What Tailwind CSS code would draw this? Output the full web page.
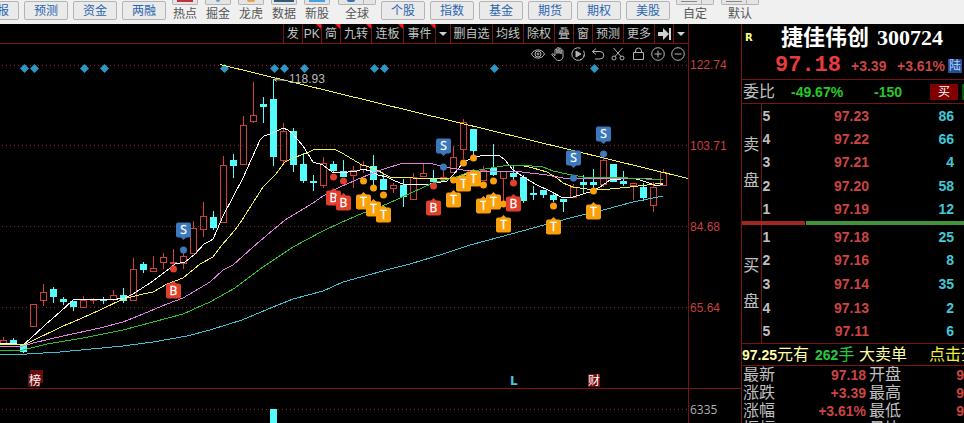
<!DOCTYPE html>
<html lang="zh-CN">

<head>
    <meta charset="UTF-8">
    <meta name="viewport" content="width=device-width, initial-scale=1.0">
    <title>捷佳伟创 300724</title>
    <script src="https://cdn.jsdelivr.net/npm/@tailwindcss/browser@4"></script>
</head>

<body class="h-screen overflow-hidden flex flex-col bg-black font-['Liberation_Sans','Noto_Sans_CJK_SC',sans-serif] text-xs leading-none">
    <!-- Top toolbar -->
    <header class="h-6 shrink-0 overflow-hidden bg-[#f0f0f0] text-[#555]">
        <nav class="-ml-[25px] flex items-start gap-[5px] whitespace-nowrap">
            <div class="flex gap-[5px] pt-px text-[#2a66ae]">
                <button class="h-[19px] w-11 rounded-xs border border-[#b4b4b4] bg-[#eaeaea]">研报</button>
                <button class="h-[19px] w-11 rounded-xs border border-[#b4b4b4] bg-[#eaeaea]">预测</button>
                <button class="h-[19px] w-11 rounded-xs border border-[#b4b4b4] bg-[#eaeaea]">资金</button>
                <button class="h-[19px] w-11 rounded-xs border border-[#b4b4b4] bg-[#eaeaea]">两融</button>
            </div>
            <div class="flex gap-[7px] pl-px">
                <button class="w-[26px]">
                    <span class="flex h-[5px] justify-center rounded-b-xs border border-t-0 border-[#b4b4b4] bg-[#e4e4e4]"><i class="h-[2px] w-4 bg-[#c03040]"></i></span>
                    <span class="mt-[2px] block leading-[14px]">热点</span>
                </button>
                <button class="w-[26px]">
                    <span class="flex h-[5px] justify-center rounded-b-xs border border-t-0 border-[#b4b4b4] bg-[#e4e4e4]"><i class="h-[2px] w-1 rounded-b-full bg-[#5b9bd5]"></i></span>
                    <span class="mt-[2px] block leading-[14px]">掘金</span>
                </button>
                <button class="w-[26px]">
                    <span class="flex h-[5px] justify-center rounded-b-xs border border-t-0 border-[#b4b4b4] bg-[#e4e4e4]"><i class="h-[2px] w-2 rounded-b-full bg-[#e8a050]"></i></span>
                    <span class="mt-[2px] block leading-[14px]">龙虎</span>
                </button>
                <button class="w-[26px]">
                    <span class="flex h-[5px] justify-center rounded-b-xs border border-t-0 border-[#b4b4b4] bg-[#e4e4e4]"><i class="h-[2px] w-5 bg-[#34587c]"></i></span>
                    <span class="mt-[2px] block leading-[14px]">数据</span>
                </button>
                <button class="w-[26px]">
                    <span class="flex h-[5px] justify-center rounded-b-xs border border-t-0 border-[#b4b4b4] bg-[#e4e4e4]"><i class="h-[2px] w-4 bg-[#4a9fe0]"></i></span>
                    <span class="mt-[2px] block leading-[14px]">新股</span>
                </button>
                <button class="ml-px w-[38px]">
                    <span class="flex h-[5px] rounded-b-xs border border-t-0 border-[#b4b4b4] bg-[#e4e4e4]"><i class="ml-2 h-[2px] w-2 rounded-b-full bg-[#3a6fb5]"></i><i class="ml-2 h-full w-px bg-[#b4b4b4]"></i></span>
                    <span class="mt-[2px] block leading-[14px]">全球</span>
                </button>
            </div>
            <div class="flex gap-[5px] pt-px text-[#2a66ae]">
                <button class="h-[19px] w-11 rounded-xs border border-[#b4b4b4] bg-[#eaeaea]">个股</button>
                <button class="h-[19px] w-11 rounded-xs border border-[#b4b4b4] bg-[#eaeaea]">指数</button>
                <button class="h-[19px] w-11 rounded-xs border border-[#b4b4b4] bg-[#eaeaea]">基金</button>
                <button class="h-[19px] w-11 rounded-xs border border-[#b4b4b4] bg-[#eaeaea]">期货</button>
                <button class="h-[19px] w-11 rounded-xs border border-[#b4b4b4] bg-[#eaeaea]">期权</button>
                <button class="h-[19px] w-11 rounded-xs border border-[#b4b4b4] bg-[#eaeaea]">美股</button>
            </div>
            <div class="flex gap-[7px] pl-px">
                <button class="w-[38px]">
                    <span class="flex h-[5px] rounded-b-xs border border-t-0 border-[#b4b4b4] bg-[#e4e4e4]"><i class="ml-1 h-[2px] w-4 border-b border-[#888]"></i><i class="ml-1 h-full w-px bg-[#b4b4b4]"></i></span>
                    <span class="mt-[2px] block leading-[14px]">自定</span>
                </button>
                <button class="w-[38px]">
                    <span class="flex h-[5px] rounded-b-xs border border-t-0 border-[#b4b4b4] bg-[#e4e4e4]"><i class="ml-1 h-[2px] w-4 border-b border-[#888]"></i><i class="ml-1 h-full w-px bg-[#b4b4b4]"></i></span>
                    <span class="mt-[2px] block leading-[14px]">默认</span>
                </button>
            </div>
        </nav>
    </header>

    <div class="flex min-h-0 flex-1">
        <!-- Chart -->
        <main class="min-w-0 flex-1 overflow-hidden">
            <div class="mr-[52px] border-r border-[#7a1414]">
                <div class="flex h-5 justify-end border-b border-[#7a1414] whitespace-nowrap text-[#c4c4c4]">
                    <button class="border-l border-[#7a1414] px-[3px]">发</button>
                    <button class="relative w-[19px] border-l border-[#7a1414]">PK<i class="absolute top-0 right-0 border-t-[5px] border-l-[5px] border-t-[#ff1a1a] border-l-transparent"></i></button>
                    <button class="relative border-l border-[#7a1414] px-[3px]">简<i class="absolute top-0 right-0 border-t-[5px] border-l-[5px] border-t-[#ff1a1a] border-l-transparent"></i></button>
                    <button class="relative border-l border-[#7a1414] px-[3px]">九转<i class="absolute top-0 right-0 border-t-[5px] border-l-[5px] border-t-[#ff1a1a] border-l-transparent"></i></button>
                    <button class="relative w-8 border-l border-[#7a1414]">连板<i class="absolute top-0 right-0 border-t-[5px] border-l-[5px] border-t-[#ff1a1a] border-l-transparent"></i></button>
                    <button class="relative w-8 border-l border-[#7a1414]">事件<i class="absolute top-0 right-0 border-t-[5px] border-l-[5px] border-t-[#ff1a1a] border-l-transparent"></i></button>
                    <button class="flex w-[15px] items-center justify-center border-l border-[#7a1414]" aria-label="事件菜单">
                        <i class="border-x-4 border-t-4 border-x-transparent border-t-[#d0d0d0]"></i>
                    </button>
                    <button class="w-[42px] border-l border-[#7a1414]">删自选</button>
                    <button class="border-l border-[#7a1414] px-[3px]">均线</button>
                    <button class="border-l border-[#7a1414] px-[3px]">除权</button>
                    <button class="border-l border-[#7a1414] px-[3px]">叠</button>
                    <button class="border-l border-[#7a1414] px-[3px]">窗</button>
                    <button class="border-l border-[#7a1414] px-[3px]">预测</button>
                    <button class="border-l border-[#7a1414] px-[3px]">更多</button>
                    <button class="flex w-[19px] items-center justify-center border-l border-[#7a1414]" aria-label="最后">
                        <svg width="13" height="12" viewBox="0 0 13 12" fill="#d0d0d0"><path d="M0 4h5V0l6 6-6 6V8H0zM11 0h2v12h-2z" /></svg>
                    </button>
                    <button class="flex w-[15px] items-center justify-center border-l border-[#7a1414]" aria-label="菜单">
                        <i class="border-x-4 border-t-4 border-x-transparent border-t-[#d0d0d0]"></i>
                    </button>
                </div>
                <div class="flex h-5 items-center justify-end gap-[6px] pr-[3px] text-[#b4b4b4]">
                    <button aria-label="显示"><svg width="14" height="14" viewBox="0 0 14 14" fill="none" stroke="currentColor"><path d="M.5 7C3 1.5 11 1.5 13.500 7 11 12.500 3 12.500.5 7z" /><circle cx="7" cy="7" r="3" /><circle cx="7" cy="7" r="1" /></svg></button>
                    <button aria-label="拖动"><svg width="14" height="14" viewBox="0 0 14 14" fill="none" stroke="currentColor"><path d="M4 8.500V3a1 1 0 0 1 2 0v3.500V1.500a1 1 0 0 1 2 0v5V2a1 1 0 0 1 2 0v5V4a1 1 0 0 1 2 0v5.500c0 2.500-1.500 4-4 4-2 0-3-.7-4-2.200L1 8c-.6-1.200.8-1.800 1.500-1L4 9" /></svg></button>
                    <button aria-label="播放"><svg width="14" height="14" viewBox="0 0 14 14" fill="none" stroke="currentColor"><path d="M9.500 1.200a6.300 6.300 0 1 0 3 2.500M9 13l2-.8M12.500 10l.8-2" /><path d="M5 4l5 3-5 3z" fill="currentColor" /></svg></button>
                    <button aria-label="撤销"><svg width="14" height="14" viewBox="0 0 14 14" fill="none" stroke="currentColor"><path d="M5 1.500L1.500 4.500 5 7.500M1.500 4.500H9a3.500 3.500 0 0 1 0 7.500H4" /></svg></button>
                    <button aria-label="剪切"><svg width="14" height="14" viewBox="0 0 14 14" fill="none" stroke="currentColor"><path d="M2.500 1l7.500 8.500M11.500 1L4 9.500" /><circle cx="3" cy="11" r="2" /><circle cx="11" cy="11" r="2" /></svg></button>
                    <button aria-label="锁定"><svg width="14" height="14" viewBox="0 0 14 14" fill="none" stroke="currentColor"><path d="M2.500 5.500h10v7h-10zM4.500 5.500V4a3 3 0 0 1 6 0v1.500" /></svg></button>
                    <button aria-label="放大"><svg width="14" height="14" viewBox="0 0 14 14" fill="none" stroke="currentColor"><circle cx="7" cy="7" r="6.300" /><path d="M3.500 7h7M7 3.500v7" /></svg></button>
                    <button aria-label="缩小"><svg width="14" height="14" viewBox="0 0 14 14" fill="none" stroke="currentColor"><circle cx="7" cy="7" r="6.300" /><path d="M3.500 7h7" /></svg></button>
                </div>
            </div>
            <svg id="chart" class="block w-full overflow-visible" viewBox="0 64 741 400"></svg>
        </main>

        <!-- Quote panel -->
        <aside class="w-[223px] shrink-0 overflow-hidden border-l border-[#7a1414] whitespace-nowrap text-[#c0c0c0]">
            <div class="h-14 border-b border-[#7a1414]">
                <h1 class="flex h-7 items-center pl-[3px] font-['Liberation_Serif','Noto_Sans_CJK_SC',serif] text-[22px] font-bold text-white">
                    <span class="w-9 font-['DejaVu_Sans',sans-serif] text-[10px] text-[#ffff80]">R</span>
                    <span class="w-24">捷佳伟创</span>
                    <span>300724</span>
                </h1>
                <div class="flex h-7 items-center pl-[33px] text-sm font-bold text-[#cc4444]">
                    <span class="w-[76px] shrink-0 font-['Liberation_Mono',monospace] text-[22px] text-[#e63c3c]">97.18</span>
                    <span class="w-[46px] shrink-0">+3.39</span>
                    <span class="w-[51px] shrink-0">+3.61%</span>
                    <span class="bg-[#24509a] p-px text-xs leading-none font-normal text-[#b8d0ff]">陆</span>
                </div>
            </div>
            <div class="flex h-6 items-center border-b border-[#7a1414] pl-px text-sm font-bold text-[#28c828]">
                <span class="w-12 shrink-0 text-base font-normal text-[#c0c0c0]">委比</span>
                <span class="w-[83px] shrink-0">-49.67%</span>
                <span class="w-14 shrink-0">-150</span>
                <button class="h-4 w-7 shrink-0 bg-[#800000] text-xs leading-none font-normal text-white">买</button>
                <button class="ml-1 h-4 w-7 shrink-0 bg-[#006000]" aria-label="卖"></button>
            </div>

            <table class="h-[117px] w-full table-fixed text-sm font-bold">
                <colgroup><col class="w-[19px]"><col class="w-5"><col class="w-[88px]"><col></colgroup>
                <tbody id="asks"></tbody>
            </table>
            <div class="flex h-1 gap-px">
                <div class="bg-[#a02820]" style="width: 28.4%"></div>
                <div class="flex-1 bg-[#429438]"></div>
            </div>
            <table class="h-[118px] w-full table-fixed text-sm font-bold">
                <colgroup><col class="w-[19px]"><col class="w-5"><col class="w-[88px]"><col></colgroup>
                <tbody id="bids"></tbody>
            </table>

            <p class="flex h-[23px] items-center border-y border-[#7a1414] text-base text-[#ffffa0]">
                <b class="text-sm">97.25</b><span class="w-[38px] shrink-0">元有</span>
                <span class="flex w-11 shrink-0 items-center text-[#28c840]"><b class="text-sm">262</b>手</span>
                <span class="w-[70px] shrink-0">大卖单</span>
                <a href="#" class="text-[#f0f040]">点击查看</a>
            </p>

            <table class="w-full table-fixed text-sm leading-[18px]">
                <colgroup><col class="w-[34px]"><col class="w-[90px]"><col class="w-[34px]"><col></colgroup>
                <tbody id="quote"></tbody>
            </table>
        </aside>
    </div>

    <script>
        // [top, bottom, high, low, up] one entry per day, 10px apart
        const candles = [
            [340, 343, 337, 343, 1], [340, 343, 338, 343, 0], [345, 351, 344, 352, 0], [304, 326, 304, 326, 1],
            [292, 300, 284, 305, 1], [289, 296, 287, 302, 0], [299, 301, 297, 304, 0], [301, 306, 301, 310, 0],
            [300, 307, 296, 307, 1], [299, 300, 298, 303, 1], [299, 300, 297, 303, 0], [295, 299, 290, 300, 1],
            [295, 300, 288, 302, 0], [269, 300, 258, 300, 1], [264, 269, 262, 272, 0], [268, 271, 256, 271, 1],
            [257, 262, 253, 268, 1], [262, 263, 249, 266, 1], [256, 263, 251, 268, 1], [228, 253, 221, 253, 1],
            [216, 229, 202, 236, 1], [217, 227, 211, 229, 0], [165, 222, 156, 222, 1], [160, 165, 154, 177, 0],
            [125, 164, 116, 164, 1], [115, 121, 82, 122, 1], [104, 106, 97, 122, 0], [99, 156, 79, 165, 0],
            [131, 160, 123, 163, 1], [131, 164, 128, 171, 0], [164, 180, 153, 182, 0], [181, 182, 175, 190, 0],
            [163, 185, 157, 187, 1], [164, 170, 161, 172, 0], [171, 176, 160, 176, 0], [170, 175, 166, 187, 1],
            [165, 169, 161, 172, 1], [166, 179, 155, 184, 0], [179, 189, 173, 189, 0], [185, 188, 183, 192, 1],
            [185, 196, 179, 206, 0], [177, 199, 173, 199, 1], [173, 176, 164, 176, 1], [178, 181, 170, 181, 0],
            [177, 179, 166, 179, 1], [157, 172, 146, 172, 1], [122, 149, 119, 158, 1], [129, 150, 129, 155, 0],
            [170, 180, 166, 180, 1], [168, 174, 144, 175, 0], [171, 178, 171, 200, 1], [173, 176, 166, 179, 0],
            [177, 200, 175, 202, 0], [193, 194, 186, 199, 0], [190, 194, 190, 197, 0], [195, 199, 192, 201, 0],
            [199, 201, 199, 211, 0], [187, 197, 184, 197, 1], [182, 184, 175, 193, 0], [182, 184, 169, 187, 0],
            [160, 184, 155, 186, 1], [164, 181, 164, 181, 0], [181, 183, 171, 185, 0], [183, 185, 183, 199, 1],
            [187, 197, 183, 200, 0], [187, 205, 182, 211, 1], [172, 185, 169, 185, 1]
        ];

        // Moving averages
        const lines = [
            ['#ffffff', '0,343 10,343 23,345 30,339 45,325 60,312 73,300 88,299 110,300 125,298 133,294 150,283 165,272 175,264 185,262 195,254 204,244 210,241 213,239 217,230 223,216 243,178 260,140 264,136 273,133 283,128 288,130 293,134 303,146 313,162 323,165 332,172 340,173 357,171 363,169 370,171 378,175 387,177 395,181 403,184 413,185 430,184 447,181 453,175 463,163 473,157 487,155 500,156 505,160 513,170 525,178 537,185 550,191 563,198 573,197 593,191 600,187 610,180 633,178 643,181 652,184 657,186 663,184'],
            ['#f0f050', '0,344 23,345 28,343 63,326 73,322 100,310 123,299 143,294 153,292 167,284 183,278 200,264 213,257 222,245 235,230 242,220 263,187 275,175 285,162 293,158 307,153 313,150 334,149 342,153 362,165 373,168 390,177 413,178 443,179 457,178 473,171 509,165 520,165 533,168 547,172 557,178 563,183 573,187 587,189 610,189 630,187 647,185 663,183'],
            ['#e080e0', '0,346 23,346 33,343 63,336 100,328 123,322 143,314 167,304 183,298 200,288 210,282 223,270 233,265 253,247 273,230 285,220 300,211 313,203 323,196 340,187 363,177 373,173 387,168 400,164 417,163 433,164 450,168 463,170 487,172 500,171 513,171 530,173 547,175 563,178 580,178 610,178 640,178 663,180'],
            ['#30c030', '0,351 23,350 47,344 83,338 123,330 153,322 183,314 203,305 210,302 235,288 263,267 293,247 323,231 340,223 363,213 387,204 413,192 433,183 453,178 473,171 509,165 520,165 543,167 553,171 567,174 583,177 610,177 663,180'],
            ['#40c0d0', '0,354 27,354 60,352 123,346 153,342 187,336 210,330 242,320 273,307 293,299 323,291 343,282 390,269 410,264 443,254 470,245 500,237 533,228 570,218 607,209 633,202 663,196']
        ];

        // [type, x, badge y, dot y]
        const signals = [
            ['B', 173, 291, 269], ['S', 183, 230, 250], ['B', 333, 198, 177], ['B', 343, 203, 181],
            ['T', 363, 202, 181], ['T', 373, 209, 188], ['T', 383, 215, 195], ['B', 433, 208, 186],
            ['S', 443, 146, 167], ['T', 453, 200, 180], ['T', 463, 184, 163], ['T', 473, 179, 158],
            ['T', 483, 206, 185], ['T', 493, 202, 181], ['T', 503, 225, 204], ['B', 513, 204, 183],
            ['T', 553, 227, 206], ['S', 573, 158, 178], ['T', 593, 212, 191], ['S', 603, 134, 154]
        ];
        const signalColor = { B: '#e0402a', S: '#3c78bc', T: '#faa00a' };

        let svg = '';

        // Grid and axis
        for (const y of [65, 145, 226, 307, 409]) {
            svg += `<path d="M2 ${y}.5H688" stroke="#962020" stroke-dasharray="1 3"/>`;
        }
        svg += '<path d="M0 388.5H741M688.5 64V464" stroke="#7a1414"/>';
        [['122.74', 69], ['103.71', 150], ['84.68', 231], ['65.64', 312]].forEach(([label, y]) => {
            svg += `<text x="690" y="${y}" font-size="12" fill="#c84040">${label}</text>`;
        });
        svg += '<text x="690" y="414" font-size="12" font-family="Open Sans" fill="#b0b0b0">6335</text>';

        for (const x of [24, 34, 84, 104, 224, 274, 284, 304, 374, 384, 494, 594]) {
            svg += `<path d="M${x + 0.5} 64l4.500 4.500-4.500 4.500-4.500-4.500z" fill="#2c96c4"/>`;
        }

        candles.forEach(([top, bottom, high, low, up], i) => {
            const x = 3 + i * 10;
            if (up) {
                svg += `<path d="M${x}.5 ${high}V${top}M${x}.5 ${bottom}V${low + 1}" stroke="#d04038"/>`;
                svg += `<rect x="${x - 3 + 0.5}" y="${top + 0.5}" width="6" height="${bottom - top}" fill="none" stroke="#d04038"/>`;
            } else {
                svg += `<path d="M${x}.5 ${high}V${low + 1}" stroke="#54fcfc"/>`;
                svg += `<rect x="${x - 3}" y="${top}" width="7" height="${bottom - top + 1}" fill="#54fcfc"/>`;
            }
        });
        svg += '<rect x="270" y="409" width="7" height="60" fill="#54fcfc"/>';

        for (const [color, points] of lines) {
            svg += `<polyline points="${points}" fill="none" stroke="${color}" shape-rendering="crispEdges"/>`;
        }
        svg += '<path d="M220 64.500L688 178.500" stroke="#f4f450" shape-rendering="crispEdges"/>';
        svg += '<path d="M288 80.500L274 79.500M277 77.500l-3 2 3 2" stroke="#c0c0c0" fill="none"/>';
        svg += '<text x="289" y="83" font-size="12" fill="#b8b8b8">118.93</text>';

        for (const [type, x, y, dot] of signals) {
            const color = signalColor[type];
            const cx = x + 0.5;
            const tip = type === 'S' ? `M${cx - 3} ${y + 7}l3 3 3-3z` : `M${cx - 3} ${y - 7}l3-3 3 3z`;
            svg += `<circle cx="${cx}" cy="${dot}" r="3.500" fill="${color}"/><path d="${tip}" fill="${color}"/>`;
            svg += `<rect x="${cx - 7.5}" y="${y - 7.5}" width="15" height="15" rx="2" fill="${color}"/>`;
            svg += `<text x="${cx}" y="${y + 4}" font-size="12" font-family="Open Sans" text-anchor="middle" fill="#fff" stroke="#fff" stroke-width=".3">${type}</text>`;
        }

        // Event tags
        svg += '<rect x="30" y="370" width="13" height="13" fill="#6a0c0c"/><rect x="28" y="374" width="12" height="13" fill="#6a0c0c"/>';
        svg += '<text x="29" y="385" font-size="12" fill="#fff">榜</text>';
        svg += '<text x="510" y="385" font-size="12" font-weight="bold" font-family="DejaVu Sans" fill="#40c8d8">L</text>';
        svg += '<rect x="588" y="374" width="12" height="13" fill="#7a0c10"/><text x="588" y="385" font-size="12" fill="#fff">财</text>';
        document.getElementById('chart').innerHTML = svg;

        // Order book
        function renderBook(id, side, rows) {
            document.getElementById(id).innerHTML = rows.map(([level, price, volume], i) => `
                <tr>
                    ${i === 0 ? `<th rowspan="5" class="border-r border-[#7a1414] p-0 text-base leading-9 font-normal">${side}<br>盘</th>` : ''}
                    <td class="p-0 pl-px">${level}</td>
                    <td class="p-0 text-right text-[#cc4444]">${price}</td>
                    <td class="p-0 pr-[10px] text-right text-[#40c8d8]">${volume}</td>
                </tr>`).join('');
        }
        renderBook('asks', '卖', [[5, '97.23', 86], [4, '97.22', 66], [3, '97.21', 4], [2, '97.20', 58], [1, '97.19', 12]]);
        renderBook('bids', '买', [[1, '97.18', 25], [2, '97.16', 8], [3, '97.14', 35], [4, '97.13', 2], [5, '97.11', 6]]);

        const quote = [['最新', '97.18', '开盘', '9'], ['涨跌', '+3.39', '最高', '9'], ['涨幅', '+3.61%', '最低', '9'], ['振幅', '', '量比', '']];
        document.getElementById('quote').innerHTML = quote.map(([a, b, c, d]) => `
            <tr class="h-[18px]">
                <th class="p-0 pl-px text-left text-base leading-[18px] font-normal">${a}</th>
                <td class="p-0 text-right font-bold text-[#cc4444]">${b}</td>
                <th class="p-0 pl-[3px] text-left text-base leading-[18px] font-normal">${c}</th>
                <td class="p-0 text-right font-bold text-[#cc4444]">${d}</td>
            </tr>`).join('');
    </script>
</body>

</html>
